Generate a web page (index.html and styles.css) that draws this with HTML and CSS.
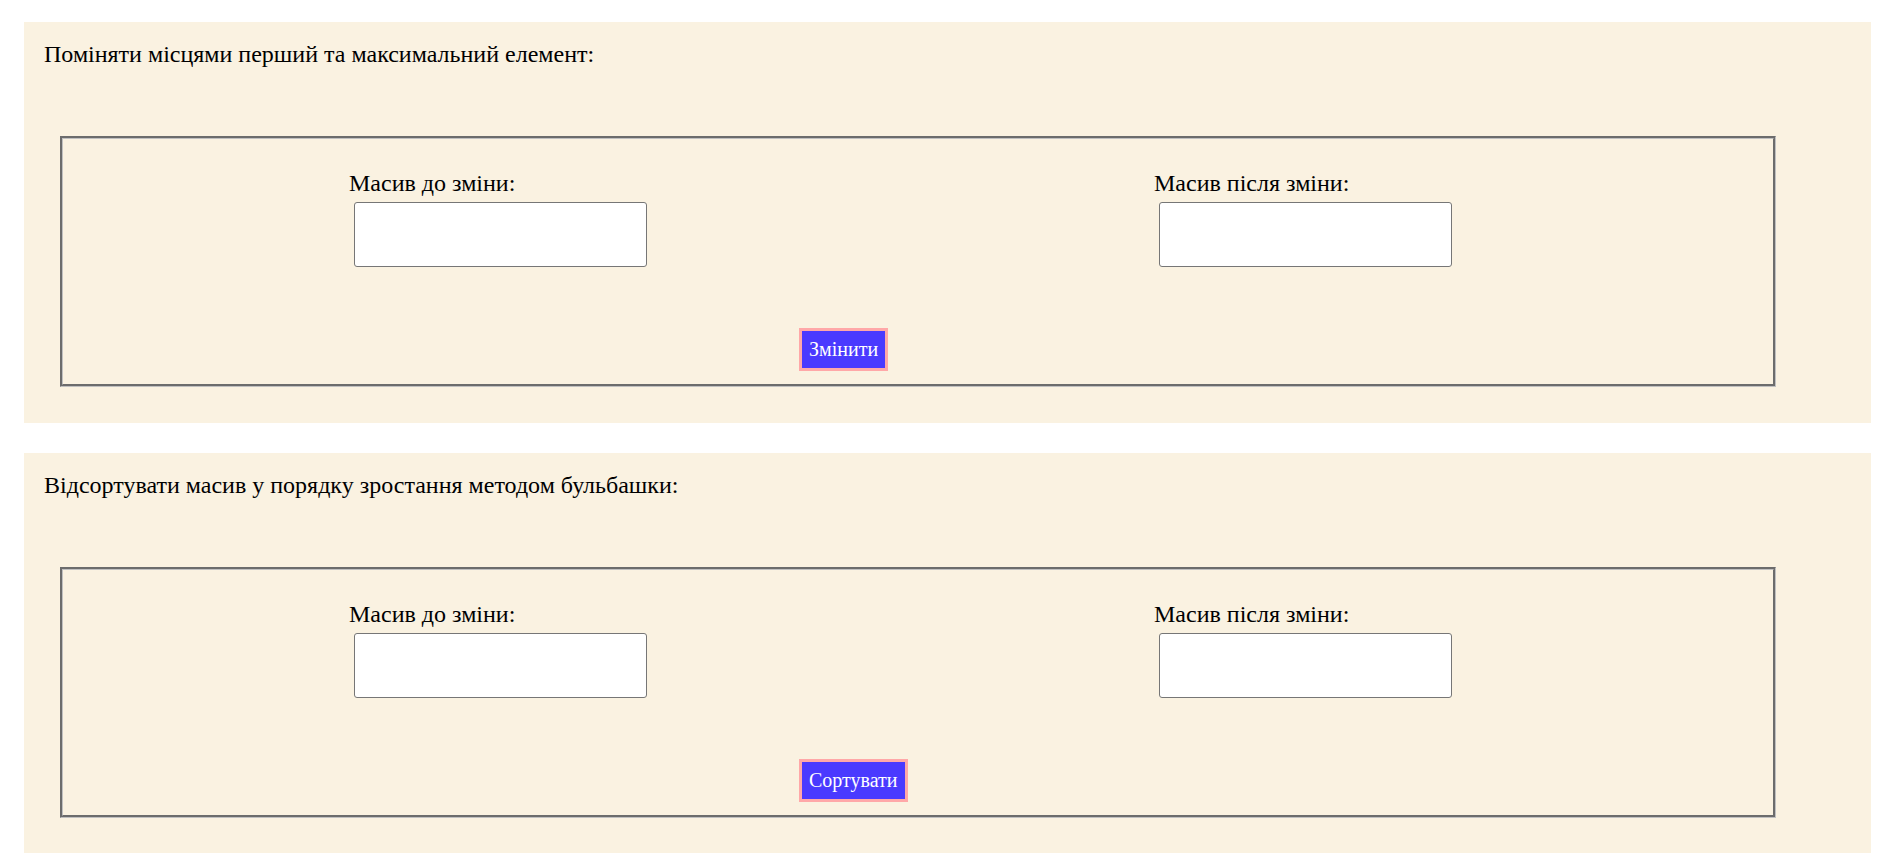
FILE: index.html
```html
<!DOCTYPE html>
<html lang="uk">
<head>
<meta charset="utf-8">
<title>Масиви</title>
<link rel="stylesheet" href="styles.css">
</head>
<body>
  <section class="task">
    <p class="task-title">Поміняти місцями перший та максимальний елемент:</p>
    <div class="task-box">
      <div class="fields">
        <div class="field field-before">
          <label class="field-label">Масив до зміни:</label>
          <textarea class="field-input"></textarea>
        </div>
        <div class="field field-after">
          <label class="field-label">Масив після зміни:</label>
          <textarea class="field-input"></textarea>
        </div>
      </div>
      <div class="actions">
        <button class="action-btn">Змінити</button>
      </div>
    </div>
  </section>

  <section class="task">
    <p class="task-title">Відсортувати масив у порядку зростання методом бульбашки:</p>
    <div class="task-box">
      <div class="fields">
        <div class="field field-before">
          <label class="field-label">Масив до зміни:</label>
          <textarea class="field-input"></textarea>
        </div>
        <div class="field field-after">
          <label class="field-label">Масив після зміни:</label>
          <textarea class="field-input"></textarea>
        </div>
      </div>
      <div class="actions">
        <button class="action-btn">Сортувати</button>
      </div>
    </div>
  </section>
</body>
</html>
```

FILE: styles.css
```css
html, body {
  background: #ffffff;
}

body {
  margin: 8px;
  font-family: "Liberation Serif", "Times New Roman", serif;
  color: #000000;
}

.task {
  box-sizing: border-box;
  margin: 14px 0 30px 16px;
  width: 1847px;
  height: 400.67px;
  padding: 18px 0 0 20px;
  background: #faf2e1;
}

.task-title {
  margin: 0 0 68px 0;
  font-size: 24px;
  line-height: 28px;
}

.task-box {
  box-sizing: border-box;
  margin-left: 16px;
  width: 1716px;
  height: 251px;
  border: 3px groove #c0c0c0;
  padding: 30px 0 0 286px;
  display: flex;
  flex-direction: column;
}

.fields {
  display: flex;
}

.field {
  display: flex;
  flex-direction: column;
  align-items: flex-start;
}

.field-before {
  width: 805px;
}

.field-label {
  font-size: 24px;
  line-height: 28px;
  margin-bottom: 5px;
}

.field-input {
  box-sizing: border-box;
  width: 293px;
  height: 65px;
  margin: 0 0 0 5px;
  padding: 2px;
  border: 1px solid #767676;
  border-radius: 3px;
  background: #ffffff;
  resize: none;
  font-family: "Liberation Mono", monospace;
}

.actions {
  display: flex;
  margin-top: 61px;
  padding-left: 450px;
}

.action-btn {
  box-sizing: border-box;
  height: 43px;
  margin: 0;
  padding: 0 7px;
  border: 3px solid #ffa8a8;
  background: #4a3aff;
  color: #ffffff;
  font-family: "Liberation Serif", "Times New Roman", serif;
  font-size: 20px;
  line-height: 37px;
}
```
